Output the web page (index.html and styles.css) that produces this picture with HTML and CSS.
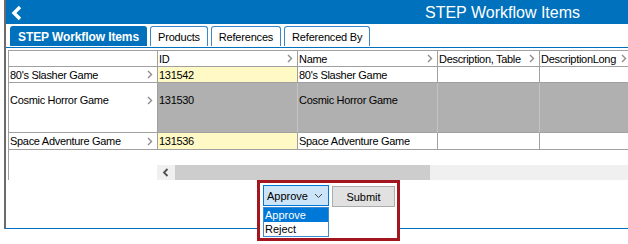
FILE: index.html
```html
<!DOCTYPE html>
<html lang="en">
<head>
    <meta charset="UTF-8">
    <title>STEP Workflow Items</title>
    <link rel="stylesheet" href="styles.css">
</head>
<body>
    <div class="window">
        <div class="header">
            <svg class="back" width="14" height="16" viewBox="0 0 14 16"><path d="M10 2L4 8l6 6" fill="none" stroke="#fff" stroke-width="3.4"/></svg>
            <span class="title">STEP Workflow Items</span>
        </div>

        <div class="tabs">
            <div class="tab active">STEP Workflow Items</div>
            <div class="tab">Products</div>
            <div class="tab">References</div>
            <div class="tab">Referenced By</div>
        </div>

        <div class="grid-wrap">
            <div class="grid">
                <div class="cell"></div>
                <div class="cell">ID <svg class="chev" width="6" height="9" viewBox="0 0 6 9"><path d="M1 1l3.5 3.5L1 8" fill="none" stroke="#8c8c8c" stroke-width="1.4"/></svg></div>
                <div class="cell">Name <svg class="chev" width="6" height="9" viewBox="0 0 6 9"><path d="M1 1l3.5 3.5L1 8" fill="none" stroke="#8c8c8c" stroke-width="1.4"/></svg></div>
                <div class="cell">Description, Table <svg class="chev" width="6" height="9" viewBox="0 0 6 9"><path d="M1 1l3.5 3.5L1 8" fill="none" stroke="#8c8c8c" stroke-width="1.4"/></svg></div>
                <div class="cell">DescriptionLong <svg class="chev" width="6" height="9" viewBox="0 0 6 9"><path d="M1 1l3.5 3.5L1 8" fill="none" stroke="#8c8c8c" stroke-width="1.4"/></svg></div>

                <div class="cell">80's Slasher Game <svg class="chev" width="6" height="9" viewBox="0 0 6 9"><path d="M1 1l3.5 3.5L1 8" fill="none" stroke="#8c8c8c" stroke-width="1.4"/></svg></div>
                <div class="cell id">131542</div>
                <div class="cell">80's Slasher Game</div>
                <div class="cell"></div>
                <div class="cell"></div>

                <div class="cell tall">Cosmic Horror Game <svg class="chev" width="6" height="9" viewBox="0 0 6 9"><path d="M1 1l3.5 3.5L1 8" fill="none" stroke="#8c8c8c" stroke-width="1.4"/></svg></div>
                <div class="cell tall sel">131530</div>
                <div class="cell tall sel">Cosmic Horror Game</div>
                <div class="cell tall sel"></div>
                <div class="cell tall sel"></div>

                <div class="cell">Space Adventure Game <svg class="chev" width="6" height="9" viewBox="0 0 6 9"><path d="M1 1l3.5 3.5L1 8" fill="none" stroke="#8c8c8c" stroke-width="1.4"/></svg></div>
                <div class="cell id">131536</div>
                <div class="cell">Space Adventure Game</div>
                <div class="cell"></div>
                <div class="cell"></div>
            </div>

            <div class="hscroll">
                <div class="arrow"><svg width="8" height="9" viewBox="0 0 8 9"><path d="M5.5 1L2 4.5 5.5 8" fill="none" stroke="#505050" stroke-width="1.8"/></svg></div>
                <div class="thumb"></div>
            </div>
        </div>

        <div class="footer">
            <div class="mark">
                <div class="select">
                    Approve
                    <svg class="drop" width="9" height="6" viewBox="0 0 9 6"><path d="M1 1l3.5 3.5L8 1" fill="none" stroke="#444" stroke-width="1"/></svg>
                    <div class="options">
                        <div class="option on">Approve</div>
                        <div class="option">Reject</div>
                    </div>
                </div>
                <button class="submit">Submit</button>
            </div>
        </div>
    </div>
</body>
</html>
```

FILE: styles.css
```css
html {
    overflow: hidden;
}
body {
    margin: 0;
    height: 244px;
    font-family: "Liberation Sans", Arial, sans-serif;
    font-size: 11px;
    color: #000;
    background: #fff;
}
.window {
    margin-left: 4px;
    height: 228px;
    border-left: 2px solid #6b6b6b;
    border-bottom: 1px solid #0071bc;
}
.header {
    height: 24px;
    background: #0071bc;
    display: flex;
    align-items: center;
    justify-content: space-between;
    padding: 0 48px 0 4px;
}
.back {
    margin-top: 1px;
}
.title {
    color: #fff;
    font-size: 16px;
    margin-top: 2px;
}
.tabs {
    height: 24px;
    box-sizing: border-box;
    border-bottom: 1px solid #0071bc;
    display: flex;
    align-items: flex-end;
    gap: 3px;
    padding: 0 0 1px 4px;
}
.tab {
    height: 20px;
    box-sizing: border-box;
    padding: 0 7px;
    border: 1px solid #3c87c9;
    border-bottom: none;
    border-radius: 3px 3px 0 0;
    display: flex;
    align-items: center;
    letter-spacing: -0.2px;
}
.tab.active {
    background: #0071bc;
    border-color: #0071bc;
    color: #fff;
    font-weight: bold;
    font-size: 12px;
    letter-spacing: -0.1px;
}
.grid-wrap {
    margin: 2px 0 0 2px;
    height: 130px;
    border-left: 1px solid #a0a0a0;
    overflow: hidden;
}
.grid {
    display: grid;
    grid-template-columns: 149px 140px 140px 102px 92px;
    grid-template-rows: 16px 16px 50px 17px;
    border-top: 1px solid #a0a0a0;
}
.cell {
    box-sizing: border-box;
    border-right: 1px solid #a0a0a0;
    border-bottom: 1px solid #a0a0a0;
    display: flex;
    align-items: center;
    justify-content: space-between;
    padding: 0 4px 0 1px;
    white-space: nowrap;
    overflow: hidden;
    letter-spacing: -0.3px;
}
.cell.tall {
    align-items: flex-start;
    padding-top: 11px;
}
.cell.tall .chev {
    margin-top: 2px;
}
.cell.id {
    background: #fff9c6;
}
.cell.sel {
    background: #b0b0b0;
    border-right-color: #c4c4c4;
}
.chev {
    flex: none;
}
.hscroll {
    margin: 15px 0 0 148px;
    height: 15px;
    background: #f0f0f0;
    display: flex;
}
.arrow {
    width: 18px;
    display: flex;
    align-items: center;
    justify-content: center;
}
.thumb {
    width: 255px;
    background: #cdcdcd;
}
.footer {
    height: 48px;
    display: flex;
    padding-left: 251px;
}
.mark {
    position: relative;
    z-index: 1;
    width: 143px;
    height: 61px;
    box-sizing: border-box;
    border: 3px solid #a3161f;
    background: #fff;
    padding: 2px 0 0 3px;
    display: flex;
    align-items: flex-start;
    gap: 3px;
}
.select {
    position: relative;
    width: 66px;
    height: 21px;
    box-sizing: border-box;
    border: 1px solid #0078d7;
    background: #cce4f7;
    display: flex;
    align-items: center;
    justify-content: space-between;
    padding: 0 5px 0 3px;
    font-size: 11px;
}
.options {
    position: absolute;
    top: 21px;
    left: -1px;
    width: 66px;
    box-sizing: border-box;
    border: 1px solid #3f8bd1;
    background: #fff;
}
.option {
    height: 14px;
    line-height: 14px;
    padding-left: 1px;
}
.option.on {
    background: #0078d7;
    color: #fff;
}
.submit {
    margin-top: 1px;
    width: 63px;
    height: 21px;
    border: 1px solid #adadad;
    background: #e1e1e1;
    font-family: "Liberation Sans", Arial, sans-serif;
    font-size: 11px;
    padding: 0;
}
```
